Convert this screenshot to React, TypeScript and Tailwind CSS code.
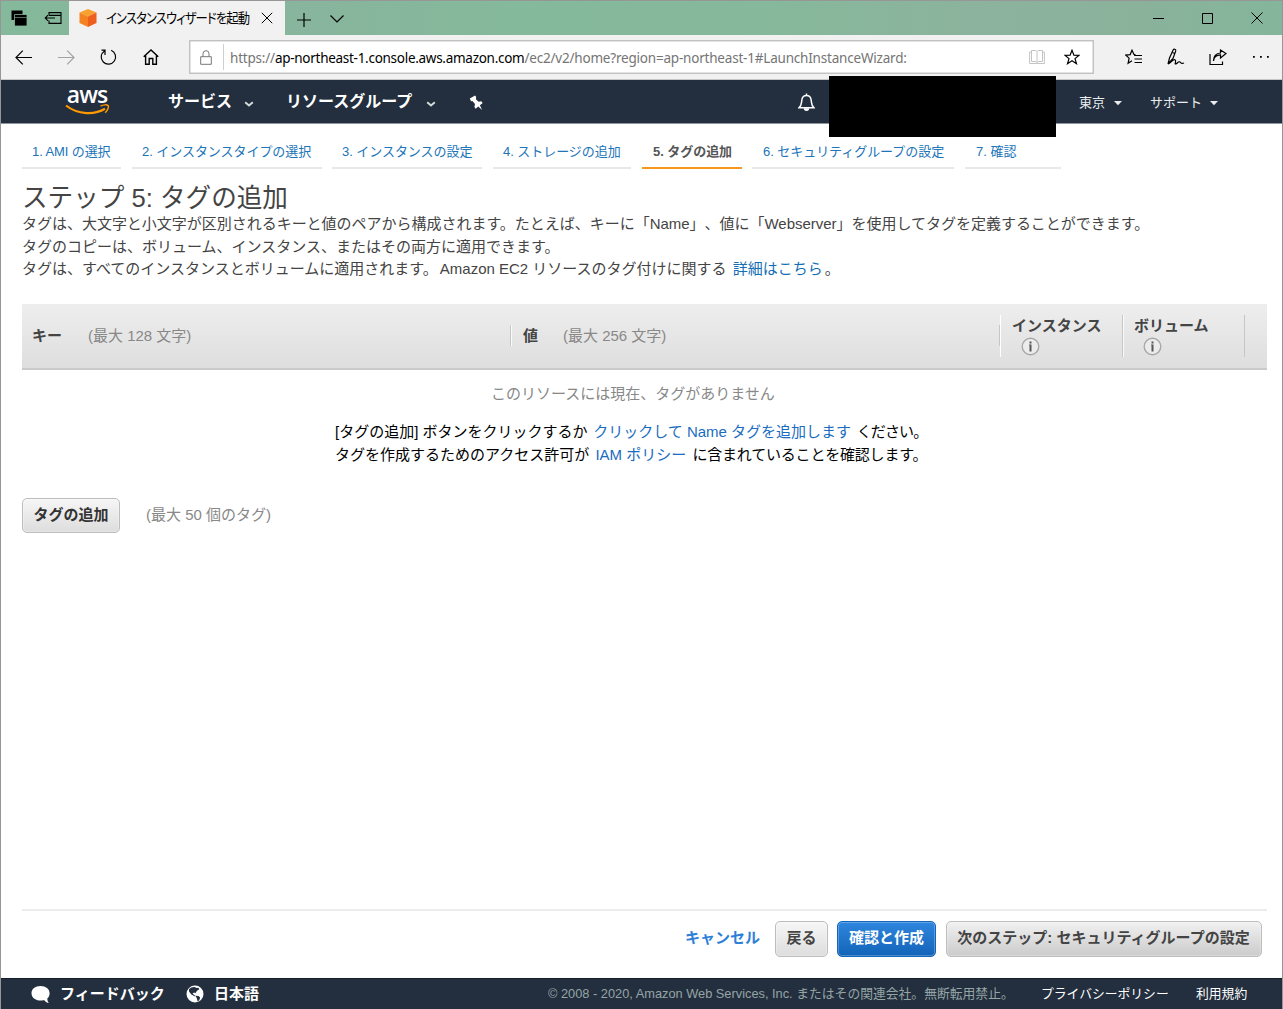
import React from "react";

const ui = "font-['Liberation_Sans','Noto_Sans_CJK_JP',sans-serif] [text-spacing-trim:space-all]";
const chrome = "font-['Noto_Sans','Noto_Sans_CJK_JP',sans-serif]";

type IconProps = { className?: string; children: React.ReactNode; w: number; h: number };
const Icon = ({ className = "", children, w, h }: IconProps) => (
  <svg
    width={w}
    height={h}
    viewBox={`0 0 ${w} ${h}`}
    fill="none"
    stroke="currentColor"
    strokeWidth="1.2"
    className={"block shrink-0 " + className}
  >
    {children}
  </svg>
);

const Caret = ({ className = "" }: { className?: string }) => (
  <Icon w={10} h={6} className={className}>
    <path d="M1 1h8L5 5.2z" fill="currentColor" stroke="none" />
  </Icon>
);

const Chevron = ({ className = "" }: { className?: string }) => (
  <Icon w={10} h={6} className={className}>
    <path d="M1.200 1.300L5 4.500l3.800-3.200" strokeWidth="2" />
  </Icon>
);

const TabStrip = () => (
  <div className="flex h-[34px] bg-[linear-gradient(90deg,#85b99b_0%,#87b59d_25%,#85b99b_40%,#86b89b_60%,#8cb39d_76%,#8ab29b_90%,#84b69b_100%)] text-black">
    <div className="flex w-[68px] items-center pl-[10px]">
      <Icon w={18} h={18} className="mt-[2px]">
        <path d="M0.5 0.500h11v9.500h-11z" fill="currentColor" stroke="none" />
        <path d="M3.500 4.500h12.500v11.500H3.500z" fill="currentColor" stroke="#85b99b" strokeWidth="0.800" />
        <path d="M4 7.500h11.500" stroke="#85b99b" strokeWidth="0.600" />
      </Icon>
      <Icon w={18} h={16} className="ml-[15px]">
        <path d="M5 5.500V2.600h12v10.800H5V10.500M5 5.400h12M1 8h10M4 5.200L1.200 8 4 10.800" strokeWidth="1.100" />
      </Icon>
    </div>
    <div className="flex w-[216px] items-center bg-[#f1f1f1] pl-[9px]">
      <Icon w={20} h={20}>
        <path d="M10 1l8.500 3.500L10 8.500 1.500 4.500z" fill="#f9a12e" stroke="none" />
        <path d="M1.500 4.500L10 8.500V19l-8.500-4z" fill="#f58220" stroke="none" />
        <path d="M18.500 4.500L10 8.500V19l8.500-4z" fill="#ee5f1e" stroke="none" />
      </Icon>
      <div className={chrome + " ml-[8px] h-[20px] w-[145px]"}>
        <div className="w-[190px] origin-left scale-x-[0.88] text-[14px] leading-[20px] tracking-[-1px] whitespace-nowrap [font-feature-settings:'palt']">
          インスタンスウィザードを起動
        </div>
      </div>
      <Icon w={12} h={12} className="ml-[10px]">
        <path d="M0.800 0.800l10.400 10.400M11.200 0.800L0.800 11.200" strokeWidth="1" />
      </Icon>
    </div>
    <div className="flex flex-1 items-center">
      <Icon w={14} h={14} className="mt-[3px] ml-3">
        <path d="M7 0v14M0 7h14" />
      </Icon>
      <Icon w={14} h={8} className="mt-[2px] ml-[19px]">
        <path d="M0.500 0.500L7 7l6.500-6.500" />
      </Icon>
    </div>
    <div className="flex items-center pr-[19px]">
      <Icon w={11} h={11}>
        <path d="M0 5.500h11" strokeWidth="1" />
      </Icon>
      <Icon w={11} h={11} className="ml-[38px]">
        <path d="M0.500 0.500h10v10h-10z" strokeWidth="1" />
      </Icon>
      <Icon w={12} h={12} className="ml-[38px]">
        <path d="M0.500 0.500l11 11M11.500 0.500l-11 11" strokeWidth="1" />
      </Icon>
    </div>
  </div>
);

const STAR = "M8 1.200l1.900 4.900 5.200.2-4.100 3.300 1.500 5.100L8 11.800l-4.500 2.900L5 9.600.9 6.300l5.200-.2z";

const Toolbar = () => (
  <div className="flex h-[45px] items-center border-b border-[#c4c6c8] bg-[#f1f1f1] text-black">
    <Icon w={17} h={15} className="ml-[14px]">
      <path d="M17 7.500H1M7.800 0.700L1 7.500l6.800 6.800" />
    </Icon>
    <Icon w={17} h={15} className="ml-[26px] text-[#a3a3a3]">
      <path d="M0 7.500h16M9.200 0.700L16 7.500l-6.800 6.800" />
    </Icon>
    <Icon w={17} h={18} className="ml-[25px]">
      <path d="M11.200 2.300a7.200 7.200 0 1 1-6.700.6M5 7V2.200H1.500M5 2.200L2 2" />
    </Icon>
    <Icon w={16} h={16} className="ml-[26px]">
      <path d="M0.700 7.800L8 1l7.300 6.800M2.600 6.500v8.700h3.600V9.500h3.600v5.700h3.600V6.500" strokeWidth="1.400" />
    </Icon>
    <div className="ml-[30px] flex h-[34px] w-[905px] items-center border border-[#c2c2c2] bg-white shadow-[inset_0_0_0_0.5px_#c8c8c8]">
      <Icon w={12} h={15} className="ml-[10px] text-[#777]">
        <path d="M0.700 6.700h10.600v7.600H0.700zM3 6.500V3.700a3 3 0 0 1 6 0v2.800" strokeWidth="1" />
      </Icon>
      <div className="ml-[11px] h-[26px] w-px bg-[#cfcfcf]" />
      <div className={chrome + " ml-[6px] w-[799px] pt-px text-[13.500px] leading-[20px] whitespace-nowrap text-[#757575]"}>
        <span className="tracking-[-0.200px]">https://</span>
        <span className="tracking-[-0.28px] text-black">ap-northeast-1.console.aws.amazon.com</span>
        <span className="tracking-[-0.200px]">/ec2/v2/home?region=ap-northeast-1#LaunchInstanceWizard:</span>
      </div>
      <Icon w={16} h={16} className="text-[#c4c4c4]">
        <path d="M2.500 1.500H7L8 2.500 9 1.500h4.500v11H9l-1 1-1-1H2.500zM8 2.500v11M2.500 3H0.600v11.500h14.800V3h-1.900" strokeWidth="1" />
      </Icon>
      <Icon w={16} h={16} className="ml-[19px]">
        <path d={STAR} />
      </Icon>
    </div>
    <Icon w={17} h={16} className="ml-[31px]">
      <path d="M10.500 5.600L9 5.400 7 1.200 5.200 5.600.8 6.100l3.300 3-1 5.200L7 11.800M9 6.500h8M9.500 10h7.500M9.500 13.500h7.500" />
    </Icon>
    <Icon w={18} h={18} className="ml-[25px]">
      <path d="M1 16l1.500-6L6 2.200c.8-1.700 3.200-1.200 2.700.8L6 10.500 1 16c3-1.300 5-5.300 7-4.300s-1 4.600.7 4.300 2.300-2.800 3.800-2.200 1.200 2.500 4.500 1.200" />
      <path d="M5.300 4.500l2.700 1" />
    </Icon>
    <Icon w={18} h={17} className="ml-6">
      <path d="M1 5v10.500h12.500v-3M4.500 12c.3-4 2.500-6 7-6.200V9l5.500-4.500L11.500 1v3C7 4.200 4.300 7.500 4.500 12z" />
    </Icon>
    <Icon w={16} h={4} className="ml-[26px]">
      <path d="M0 1h1.800v1.800H0zM7 1h1.800v1.800H7zM14 1h1.800v1.800H14z" fill="currentColor" stroke="none" />
    </Icon>
  </div>
);

const NavBar = () => (
  <div className={ui + " flex h-[44px] items-start border-b border-[#8e949c] bg-[#232f3e] text-white"}>
    <div className="ml-[63px] flex w-[46px] flex-col items-center">
      <span className="mt-[4px] h-[20px] font-['Open_Sans',sans-serif] text-[23px] leading-[20px] font-semibold tracking-[-1px]">aws</span>
      <Icon w={45} h={12}>
        <path d="M1 1.500c12 9.500 29 9.500 39 3.300" stroke="#f90" strokeWidth="2.200" />
        <path d="M35.500 2.200c3-1.700 6.500-1.600 7.700-.7.700 1.500-.4 5-3 7.300" stroke="#f90" strokeWidth="1.500" />
      </Icon>
    </div>
    <div className="ml-[58px] flex h-[43px] items-center">
      <span className="w-[76px] text-[16px] leading-[20px] font-bold whitespace-nowrap">サービス</span>
      <Chevron className="mt-[4px] text-[#d5dbdb]" />
      <span className="ml-[32px] w-[140px] text-[16px] leading-[20px] font-bold whitespace-nowrap">リソースグループ</span>
      <Chevron className="mt-[4px] text-[#d5dbdb]" />
      <Icon w={16} h={16} className="mt-[2px] ml-[33px]">
        <path d="M0.800 3.500L6 0.500l1.200 1.500-.3 2.200 2.700 2.600 2.600-.6 1.500 1.800-2.800 2.300 2.200 4.700-3.800-3.500-2.600 2.200-1.300-1.800.6-2.800L3.400 6l-1.400.2z" fill="currentColor" stroke="none" />
      </Icon>
    </div>
    <Icon w={17} h={19} className="mt-[13px] ml-[313px]">
      <path d="M1 14.700c3-2.700 2.400-5.200 2.900-8C4.300 4 6.200 2.600 8.500 2.600s4.200 1.400 4.600 4.100c.5 2.800-.1 5.300 2.900 8zM8.500 2.600V.6" strokeWidth="1.500" />
      <path d="M5.800 15.300h5.400a2.700 2.700 0 0 1-5.400 0z" fill="currentColor" stroke="none" />
    </Icon>
    <div className="relative z-10 -mt-1 ml-[14px] h-[61px] w-[227px] bg-black" />
    <div className="ml-[23px] flex h-[46px] items-center text-[13px] leading-[20px] whitespace-nowrap text-[#eaeded]">
      <span className="w-[34px]">東京</span>
      <Caret />
      <span className="ml-[27px] w-[59px]">サポート</span>
      <Caret />
    </div>
  </div>
);

const Step = ({ label, className, active = false }: { label: string; className: string; active?: boolean }) => (
  <div
    className={
      "mr-[10px] h-[28px] border-b-2 text-[13px] leading-[22px] whitespace-nowrap " +
      (active ? "border-[#f7981d] font-bold text-[#555] " : "border-[#e8e8e8] text-[#2074b8] ") +
      className
    }
  >
    {label}
  </div>
);

const Steps = () => (
  <div className="flex pt-[17px]">
    <Step className="w-[99px] pl-[10px] tracking-[-0.1px]" label="1. AMI の選択" />
    <Step className="ml-px w-[190px] pl-[10px] tracking-[-0.05px]" label="2. インスタンスタイプの選択" />
    <Step className="w-[150px] pl-[10px] tracking-[-0.05px]" label="3. インスタンスの設定" />
    <Step className="ml-px w-[138px] pl-[10px] tracking-[-0.05px]" label="4. ストレージの追加" />
    <Step className="ml-px w-[100px] pl-[11px] tracking-[-0.05px]" label="5. タグの追加" active />
    <Step className="w-[202px] pl-[11px] tracking-[-0.05px]" label="6. セキュリティグループの設定" />
    <Step className="ml-px w-[96px] pl-[11px]" label="7. 確認" />
  </div>
);

const Info = () => (
  <Icon w={19} h={19} className="mt-[1px] ml-[9px]">
    <circle cx="9.500" cy="9.500" r="8.300" stroke="#a8a8a8" strokeWidth="1.400" fill="#ececec" />
    <path d="M9.500 4.500v2M9.500 7.500v7" stroke="#555" strokeWidth="2" />
    <path d="M8 8h1.500" stroke="#777" strokeWidth="1" />
  </Icon>
);

const Sep = ({ className }: { className: string }) => (
  <div className={"w-[2px] border-l border-[#c6c6c6] bg-white/80 " + className} />
);

const TableHead = () => (
  <div className="flex h-[66px] items-center border-b-2 border-[#cacaca] bg-gradient-to-b from-[#eeeeee] to-[#dedede] pb-px text-[15px] leading-[20px] whitespace-nowrap">
    <span className="ml-[10px] w-[56px] font-bold text-[#444]">キー</span>
    <span className="w-[422px] text-[#888]">(最大 128 文字)</span>
    <Sep className="h-[21px]" />
    <span className="ml-[11px] w-[40px] font-bold text-[#444]">値</span>
    <span className="w-[436px] text-[#888]">(最大 256 文字)</span>
    <div className="h-[21px] w-px bg-[#c6c6c6]" />
    <div className="h-[42px] w-px bg-white" />
    <div className="ml-[11px] w-[110px] font-bold text-[#444]">
      インスタンス
      <Info />
    </div>
    <Sep className="h-[42px]" />
    <div className="ml-[10px] w-[110px] font-bold text-[#444]">
      ボリューム
      <Info />
    </div>
    <div className="h-[42px] w-px bg-[#c6c6c6]" />
  </div>
);

const Button = ({ children, className }: { children: React.ReactNode; className: string }) => (
  <button
    className={
      "flex shrink-0 items-center justify-center rounded-[5px] border text-[15px] leading-[20px] font-bold whitespace-nowrap shadow-[inset_0_0_0_1px_rgba(255,255,255,0.25)] " +
      className
    }
  >
    {children}
  </button>
);

const Footer = () => (
  <div className="flex h-[31px] items-center border-t border-[#161e2a] bg-[#232f3e] whitespace-nowrap text-white">
    <Icon w={19} h={19} className="ml-[30px]">
      <path d="M9.500 1C4.300 1 .5 4 .5 8.200s3.800 7.300 9 7.300c1.300 0 2.500-.2 3.600-.6 1.200 1.800 2.800 2.800 4.700 3-1-1.200-1.500-2.700-1.500-4.500 1.500-1.300 2.300-3.100 2.300-5.200C18.600 4 14.700 1 9.500 1z" fill="#fff" stroke="none" />
    </Icon>
    <span className="ml-[10px] w-[126px] text-[15px] leading-[20px] font-bold">フィードバック</span>
    <Icon w={18} h={18}>
      <circle cx="9" cy="9" r="8.500" fill="#fff" stroke="none" />
      <path d="M3 4.200C4.500 2.400 6.500 1.800 8.500 1.900l2.300 1.200 1.700-.4.800 1.500-2.300 1.500-1.600 2.600-1.300-.7-1.600.9 1.400 1.300 1.700 1.200-1 .3-3.200-1.700L3 6.500z" fill="#232f3e" stroke="none" />
      <path d="M9.500 10.800l3 .2 1.700 1.500-1 2.700-1.600 1.200-.6-2.700z" fill="#232f3e" stroke="none" />
    </Icon>
    <span className="ml-[10px] w-[334px] text-[15px] leading-[20px] font-bold">日本語</span>
    <span className="w-[493px] text-[12.800px] leading-[20px] text-[#95a5a6]">
      © 2008 - 2020, Amazon Web Services, Inc. またはその関連会社。無断転用禁止。
    </span>
    <span className="w-[155px] text-[12.800px] leading-[20px]">プライバシーポリシー</span>
    <span className="text-[12.800px] leading-[20px]">利用規約</span>
  </div>
);

export default function App() {
  return (
    <div className="flex h-[1009px] w-[1283px] flex-col overflow-hidden border-x border-t border-[#969696] bg-white">
      <TabStrip />
      <Toolbar />
      <NavBar />
      <main className={ui + " flex flex-1 flex-col pr-[15px] pl-[21px] text-[#444]"}>
        <Steps />
        <h1 className="mt-[13px] h-[31px] text-[25.600px] leading-[32px] whitespace-nowrap">ステップ 5: タグの追加</h1>
        <div className="h-[91px] text-[15px] leading-[22.700px] whitespace-nowrap">
          <p className="tracking-[-0.02px]">タグは、大文字と小文字が区別されるキーと値のペアから構成されます。たとえば、キーに「Name」、値に「Webserver」を使用してタグを定義することができます。</p>
          <p>タグのコピーは、ボリューム、インスタンス、またはその両方に適用できます。</p>
          <p>
            タグは、すべてのインスタンスとボリュームに適用されます。<span className="ml-[2px]">Amazon EC2</span> リソースのタグ付けに関する{" "}
            <a className="ml-[2px] text-[#146eb4]">詳細はこちら</a>
            <span className="ml-[2px]">。</span>
          </p>
        </div>
        <TableHead />
        <p className="mt-[13px] ml-[469px] text-[15px] leading-[22px] text-[#888]">このリソースには現在、タグがありません</p>
        <div className="mt-[16px] ml-[313px] h-[46px] text-[15px] leading-[22.700px] whitespace-nowrap text-black">
          <p>
            [タグの追加] ボタンをクリックするか <a className="mx-[1.500px] text-[#1a6cc0]">クリックして Name タグを追加します</a>{" "}
            <span className="tracking-[-0.900px]">ください。</span>
          </p>
          <p>
            タグを作成するためのアクセス許可が <a className="mx-[2px] text-[#1a6cc0]">IAM ポリシー</a>{" "}
            <span className="tracking-[-0.200px]">に含まれていることを確認します。</span>
          </p>
        </div>
        <div className="mt-[31px] flex items-center text-[15px]">
          <Button className="h-[35px] w-[98px] border-[#bdbdbd] bg-gradient-to-b from-[#f6f6f6] to-[#dddddd] pb-[2px] text-[#333]">タグの追加</Button>
          <span className="ml-[26px] text-[#888]">(最大 50 個のタグ)</span>
        </div>
        <div className="mt-auto flex h-[69px] justify-end border-t-2 border-[#ececec] pt-[10px] pr-[5px]">
          <a className="mr-[15px] text-[15px] leading-[34px] font-bold text-[#2e7fd8]">キャンセル</a>
          <Button className="mr-[9px] h-[36px] w-[53px] border-[#bdbdbd] bg-gradient-to-b from-[#f6f6f6] to-[#dddddd] pb-[2px] text-[#444]">戻る</Button>
          <Button className="mr-[10px] h-[36px] w-[99px] border-[#1166bb] bg-gradient-to-b from-[#2e86de] to-[#1264b8] pb-[2px] text-white">確認と作成</Button>
          <Button className="h-[36px] w-[316px] border-[#bdbdbd] bg-gradient-to-b from-[#f1f1f1] to-[#cbcbcb] pr-px pb-[2px] text-[#444]">次のステップ: セキュリティグループの設定</Button>
        </div>
      </main>
      <div className={ui}>
        <Footer />
      </div>
    </div>
  );
}
